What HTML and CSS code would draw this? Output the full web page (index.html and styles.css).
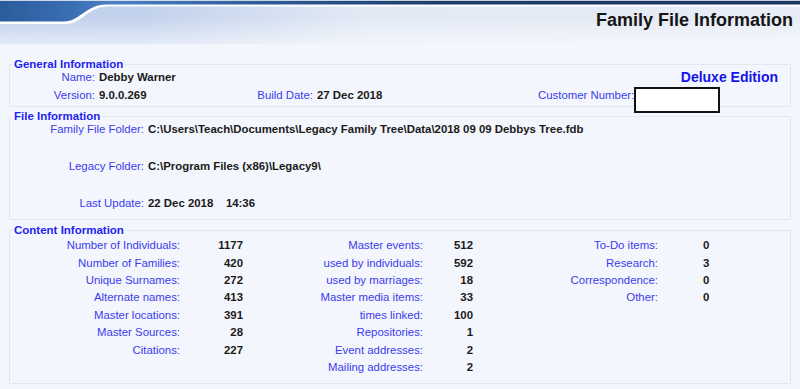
FILE: index.html
```html
<!DOCTYPE html>
<html lang="en">
<head>
<meta charset="utf-8">
<title>Family File Information</title>
<link rel="stylesheet" href="styles.css">
</head>
<body>
<header class="header">
  <svg class="header-bg" width="800" height="44" viewBox="0 0 800 44" preserveAspectRatio="none" aria-hidden="true">
    <defs>
      <linearGradient id="lh" x1="0" y1="0" x2="1" y2="0">
        <stop offset="0" stop-color="#c2d1eb"/>
        <stop offset="0.18" stop-color="#c2d2ec"/>
        <stop offset="0.45" stop-color="#e2e9f5"/>
        <stop offset="1" stop-color="#e7ecf6"/>
      </linearGradient>
      <linearGradient id="lv" x1="0" y1="0" x2="0" y2="1">
        <stop offset="0.4" stop-color="#ffffff" stop-opacity="0"/>
        <stop offset="1" stop-color="#ffffff" stop-opacity="0.55"/>
      </linearGradient>
      <linearGradient id="band" x1="0" y1="0" x2="1" y2="0">
        <stop offset="0" stop-color="#2b5b9b"/>
        <stop offset="0.09" stop-color="#3a6fb3"/>
        <stop offset="0.14" stop-color="#4b82c4"/>
        <stop offset="0.32" stop-color="#2e5d97"/>
        <stop offset="0.55" stop-color="#1d3c6b"/>
        <stop offset="1" stop-color="#1a3662"/>
      </linearGradient>
    </defs>
    <rect width="800" height="44" fill="url(#lh)"/>
    <rect width="800" height="44" fill="url(#lv)"/>
    <path d="M0 24 H66 C82 24 88 6.5 108 6.5 H800 V0 H0 Z" fill="#ffffff"/>
    <path d="M0 21.5 H64 C80 21.5 86 4.5 106 4.5 H800 V0.8 H0 Z" fill="url(#band)"/>
  </svg>
  <h1 class="title">Family File Information</h1>
</header>

<main class="content">
  <fieldset class="box box-general">
    <legend>General Information</legend>
    <div class="general-grid">
      <span class="lbl">Name:</span>
      <span class="val">Debby Warner</span>
      <span class="edition">Deluxe Edition</span>

      <span class="lbl">Version:</span>
      <span class="val">9.0.0.269</span>
      <span class="lbl">Build Date:</span>
      <span class="val">27 Dec 2018</span>
      <span class="lbl lbl-left customer">Customer Number:<span class="redact"></span></span>
    </div>
  </fieldset>

  <fieldset class="box box-file">
    <legend>File Information</legend>
    <div class="file-grid">
      <span class="lbl">Family File Folder:</span>
      <span class="val">C:\Users\Teach\Documents\Legacy Family Tree\Data\2018 09 09 Debbys Tree.fdb</span>
      <span class="lbl">Legacy Folder:</span>
      <span class="val">C:\Program Files (x86)\Legacy9\</span>
      <span class="lbl">Last Update:</span>
      <span class="val">22 Dec 2018&nbsp;&nbsp;&nbsp;&nbsp;14:36</span>
    </div>
  </fieldset>

  <fieldset class="box box-content">
    <legend>Content Information</legend>
    <div class="stats">
      <div class="group g1">
        <span class="lbl">Number of Individuals:</span><span class="num">1177</span>
        <span class="lbl">Number of Families:</span><span class="num">420</span>
        <span class="lbl">Unique Surnames:</span><span class="num">272</span>
        <span class="lbl">Alternate names:</span><span class="num">413</span>
        <span class="lbl">Master locations:</span><span class="num">391</span>
        <span class="lbl">Master Sources:</span><span class="num">28</span>
        <span class="lbl">Citations:</span><span class="num">227</span>
      </div>
      <div class="group g2">
        <span class="lbl">Master events:</span><span class="num">512</span>
        <span class="lbl">used by individuals:</span><span class="num">592</span>
        <span class="lbl">used by marriages:</span><span class="num">18</span>
        <span class="lbl">Master media items:</span><span class="num">33</span>
        <span class="lbl">times linked:</span><span class="num">100</span>
        <span class="lbl">Repositories:</span><span class="num">1</span>
        <span class="lbl">Event addresses:</span><span class="num">2</span>
        <span class="lbl">Mailing addresses:</span><span class="num">2</span>
      </div>
      <div class="group g3">
        <span class="lbl">To-Do items:</span><span class="num">0</span>
        <span class="lbl">Research:</span><span class="num">3</span>
        <span class="lbl">Correspondence:</span><span class="num">0</span>
        <span class="lbl">Other:</span><span class="num">0</span>
      </div>
    </div>
  </fieldset>
</main>
</body>
</html>
```

FILE: styles.css
```css
html, body {
  margin: 0;
  padding: 0;
}

body {
  background: #f3f6fc;
  font-family: "Liberation Sans", Arial, sans-serif;
  font-size: 11.4px;
  color: #1a1a1a;
  width: 800px;
  height: 389px;
  overflow: hidden;
}

.header {
  position: relative;
  height: 44px;
  display: flex;
  justify-content: flex-end;
  align-items: flex-start;
}

.header-bg {
  position: absolute;
  left: 0;
  top: 0;
  display: block;
}

.title {
  position: relative;
  margin: 9px 7px 0 0;
  font-size: 18px;
  line-height: 22px;
  font-weight: bold;
  color: #151515;
}

.content {
  padding: 13.5px 9px 0 9px;
  display: flex;
  flex-direction: column;
}

.box {
  margin: 0;
  padding: 0;
  border: 1px solid #e1e6ef;
  min-width: 0;
}

.box legend {
  margin-left: 2px;
  padding: 0 2px;
  font-weight: bold;
  font-size: 11.5px;
  line-height: 13px;
  color: #1f1ff2;
}

.lbl {
  color: #3b3bee;
  text-align: right;
  white-space: nowrap;
}

.val, .num {
  font-weight: bold;
  white-space: nowrap;
}

/* General information */
.box-general {
  padding-bottom: 4px;
}

.general-grid {
  display: grid;
  grid-template-columns: 85px 129px 81px 217px auto;
  column-gap: 4px;
  row-gap: 5px;
  line-height: 13px;
  padding-right: 12px;
}

.edition {
  grid-column: 3 / 6;
  text-align: right;
  font-weight: bold;
  font-size: 14px;
  color: #1414ec;
  line-height: 13px;
}

.lbl-left {
  text-align: left;
}

.customer {
  position: relative;
  justify-self: start;
}

.redact {
  position: absolute;
  left: 100%;
  top: -2px;
  width: 86px;
  height: 26px;
  box-sizing: border-box;
  background: #ffffff;
  border: 2px solid #111111;
}

/* File information */
.box-file {
  margin-top: 3.5px;
  padding-bottom: 8.5px;
}

.file-grid {
  display: grid;
  grid-template-columns: 134px auto;
  column-gap: 4px;
  row-gap: 24px;
  line-height: 13px;
}

/* Content information */
.box-content {
  margin-top: 4.5px;
  padding-bottom: 7px;
}

.stats {
  display: flex;
  align-items: flex-start;
}

.group {
  display: grid;
  grid-auto-rows: 17.4px;
  align-items: center;
  line-height: 13px;
}

.g1 {
  grid-template-columns: 170px 63px;
}

.g2 {
  grid-template-columns: 180px 50px;
}

.g3 {
  grid-template-columns: 185px 50px;
}

.g1 .num, .g2 .num {
  text-align: right;
}

.g3 .num {
  padding-left: 45px;
}
```
